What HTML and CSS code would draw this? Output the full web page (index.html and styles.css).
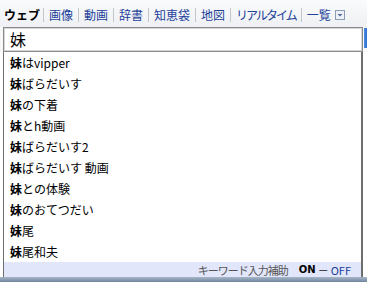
FILE: index.html
```html
<!DOCTYPE html>
<html lang="ja">
<head>
  <meta charset="UTF-8">
  <meta name="viewport" content="width=device-width, initial-scale=1.0">
  <title>検索</title>
  <link rel="stylesheet" href="styles.css">
</head>
<body>
<div class="tabs">
  <span class="tab current">ウェブ</span>
  <span class="sep"></span>
  <a class="tab" href="#">画像</a>
  <span class="sep"></span>
  <a class="tab" href="#">動画</a>
  <span class="sep"></span>
  <a class="tab" href="#">辞書</a>
  <span class="sep"></span>
  <a class="tab" href="#">知恵袋</a>
  <span class="sep"></span>
  <a class="tab" href="#">地図</a>
  <span class="sep"></span>
  <a class="tab narrow" href="#">リアルタイム</a>
  <span class="sep"></span>
  <a class="tab" href="#">一覧</a>
  <span class="more">
    <svg width="10" height="10" viewBox="0 0 10 10">
      <rect x="0.5" y="0.5" width="9" height="9" fill="#eef2f8" stroke="#8d9cb5"/>
      <path d="M2.5 4 L7.5 4 L5 6.5 Z" fill="#4d6a9a"/>
    </svg>
  </span>
</div>

<div class="searchRow">
  <div class="search">妹</div>
  <div class="scrollEdge"></div>
</div>

<ul class="suggest">
  <li><b>妹</b>はvipper</li>
  <li><b>妹</b>ばらだいす</li>
  <li><b>妹</b>の下着</li>
  <li><b>妹</b>とh動画</li>
  <li><b>妹</b>ばらだいす2</li>
  <li><b>妹</b>ばらだいす 動画</li>
  <li><b>妹</b>との体験</li>
  <li><b>妹</b>のおてつだい</li>
  <li><b>妹</b>尾</li>
  <li><b>妹</b>尾和夫</li>
</ul>
<div class="assist">
  <span class="assistLabel">キーワード入力補助</span>
  <b class="on">ON</b>
  <span class="dash">－</span>
  <a class="off" href="#">OFF</a>
</div>
<div class="bottomBar"></div>
</body>
</html>
```

FILE: styles.css
```css
body {
  margin: 0;
  width: 367px;
  height: 285px;
  overflow: hidden;
  background-color: #fff;
  font-family: "Noto Sans CJK JP", "DejaVu Sans", sans-serif;
  color: #000;
}

.tabs {
  display: flex;
  align-items: center;
  gap: 5px;
  height: 27px;
  padding: 2px 0 0 4px;
  box-sizing: border-box;
  background: linear-gradient(#fafbfc, #eef0f3);
  font-size: 12px;
}

.tab {
  color: #21409a;
  text-decoration: none;
  line-height: 14px;
}

.tab.current {
  color: #000;
  font-weight: bold;
  margin-right: -2px;
}

.tab.narrow {
  letter-spacing: -2px;
}

.sep {
  width: 1px;
  height: 14px;
  background-color: #c4c6ca;
}

.more {
  display: flex;
  margin-left: -1px;
}

.searchRow {
  display: flex;
  align-items: flex-start;
  background-color: #f7f8fa;
}

.search {
  margin-left: 3px;
  width: 360px;
  height: 25px;
  box-sizing: border-box;
  border: 1px solid #8a8a8a;
  box-shadow: inset 0 0 0 1px #d6d6d6;
  background-color: #fff;
  padding-left: 6px;
  font-size: 16px;
  line-height: 23px;
}

.scrollEdge {
  margin: 1px 0 0 1px;
  width: 3px;
  height: 20px;
  background: linear-gradient(90deg, #4f8fe0, #2f6cd0);
}

.suggest {
  list-style: none;
  margin: 0 0 0 3px;
  padding: 0;
  width: 360px;
  box-sizing: border-box;
  border-left: 1px solid #6e6e6e;
  border-right: 2px solid #6e6e6e;
  background-color: #fff;
  font-size: 12px;
}

.suggest li {
  height: 21px;
  line-height: 21px;
  padding-left: 6px;
}

.assist {
  display: flex;
  align-items: center;
  justify-content: flex-end;
  margin-left: 3px;
  width: 360px;
  height: 15px;
  box-sizing: border-box;
  padding-right: 10px;
  border-left: 1px solid #6e6e6e;
  border-right: 2px solid #6e6e6e;
  background-color: #e2e6fa;
  font-size: 11px;
}

.assistLabel {
  color: #555;
  letter-spacing: -1px;
  margin-right: 11px;
}

.on {
  font-family: "DejaVu Sans", sans-serif;
  font-size: 10px;
}

.dash {
  color: #222;
  margin: 0 2px;
}

.off {
  color: #21409a;
  text-decoration: none;
}

.bottomBar {
  height: 5px;
  background: linear-gradient(#a7b6c8, #70869f);
}
```
